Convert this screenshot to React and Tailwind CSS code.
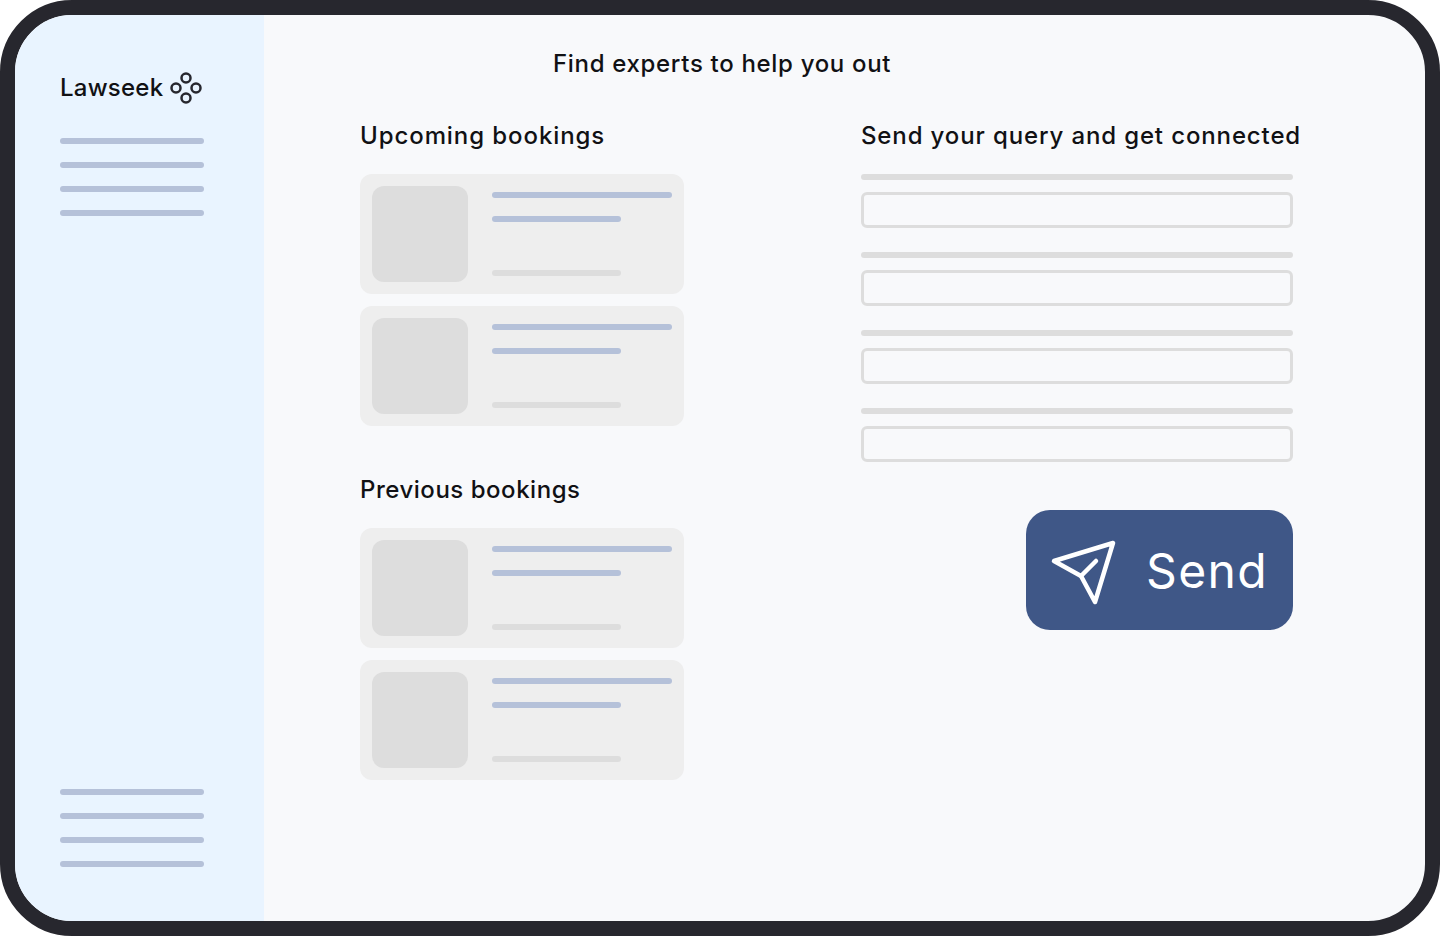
const font = "font-['Inter','Liberation_Sans',sans-serif]";

function Line({ className }) {
  return <div className={`h-[6px] rounded-full ${className}`} />;
}

function NavLines() {
  return (
    <div className="flex flex-col gap-[18px]">
      <Line className="w-[144px] bg-[#b5c1d9]" />
      <Line className="w-[144px] bg-[#b5c1d9]" />
      <Line className="w-[144px] bg-[#b5c1d9]" />
      <Line className="w-[144px] bg-[#b5c1d9]" />
    </div>
  );
}

function Card() {
  return (
    <div className="flex h-[120px] w-[324px] gap-[24px] rounded-[12px] bg-[#eeeeee] p-[12px]">
      <div className="h-[96px] w-[96px] rounded-[12px] bg-[#dddddd]" />
      <div className="flex flex-col pt-[6px]">
        <Line className="w-[180px] bg-[#b5c1d9]" />
        <Line className="mt-[18px] w-[129px] bg-[#b5c1d9]" />
        <Line className="mt-[48px] w-[129px] bg-[#dddddd]" />
      </div>
    </div>
  );
}

function Field() {
  return (
    <div className="flex flex-col gap-[12px]">
      <Line className="w-[432px] bg-[#dddddd]" />
      <div className="h-[36px] w-[432px] rounded-[6px] border-[3px] border-[#dddddd]" />
    </div>
  );
}

export default function App() {
  return (
    <div className={`h-[936px] w-[1440px] overflow-hidden bg-white ${font}`}>
      <div className="flex h-[936px] w-[1440px] overflow-hidden rounded-[72px] border-[15px] border-[#27272e] bg-[#f8f9fb]">
        <aside className="flex w-[249px] shrink-0 flex-col justify-between bg-[#e9f4ff] pb-[54px] pl-[45px] pt-[57px]">
          <div>
            <div className="flex h-[32px] items-center">
              <span className="text-[24px] font-medium leading-[32px] tracking-[0.25px] text-[#111114]">Lawseek</span>
              <svg className="ml-[7px]" width="32" height="32" viewBox="0 0 32 32" fill="none" stroke="#27272e" strokeWidth="2.5">
                <circle cx="16" cy="6" r="4.5" />
                <circle cx="6" cy="16" r="4.5" />
                <circle cx="26" cy="16" r="4.5" />
                <circle cx="16" cy="26" r="4.5" />
              </svg>
            </div>
            <div className="mt-[34px]">
              <NavLines />
            </div>
          </div>
          <NavLines />
        </aside>
        <main className="flex-1 pt-[31px]">
          <h1 className="ml-[289px] whitespace-nowrap text-[24px] font-medium leading-[36px] tracking-[0.68px] text-[#111114]">Find experts to help you out</h1>
          <div className="mt-[36px] flex pl-[96px]">
            <section className="w-[501px] shrink-0">
              <h2 className="mb-[20px] whitespace-nowrap text-[24px] font-medium leading-[36px] tracking-[0.92px] text-[#111114]">Upcoming bookings</h2>
              <div className="flex flex-col gap-[12px]">
                <Card />
                <Card />
              </div>
              <h2 className="mb-[20px] mt-[46px] whitespace-nowrap text-[24px] font-medium leading-[36px] tracking-[0.53px] text-[#111114]">Previous bookings</h2>
              <div className="flex flex-col gap-[12px]">
                <Card />
                <Card />
              </div>
            </section>
            <section className="w-[432px] shrink-0">
              <h2 className="mb-[20px] whitespace-nowrap text-[24px] font-medium leading-[36px] tracking-[0.87px] text-[#111114]">Send your query and get connected</h2>
              <div className="flex flex-col gap-[24px]">
                <Field />
                <Field />
                <Field />
                <Field />
              </div>
              <button className="relative ml-auto mt-[48px] flex h-[120px] w-[267px] items-center rounded-[24px] bg-[#3f5787] pl-[120px] pt-[2px] text-[48px] leading-none tracking-[1.4px] text-white">
                <svg className="absolute left-[24px] top-[28px]" width="68" height="68" viewBox="0 0 68 68" fill="none" stroke="white" strokeWidth="4.5" strokeLinecap="round" strokeLinejoin="round">
                  <path d="M4 23 L63 5 L45 64 L31 38 Z" />
                  <path d="M31 38 L46 23" />
                </svg>
                Send
              </button>
            </section>
          </div>
        </main>
      </div>
    </div>
  );
}
